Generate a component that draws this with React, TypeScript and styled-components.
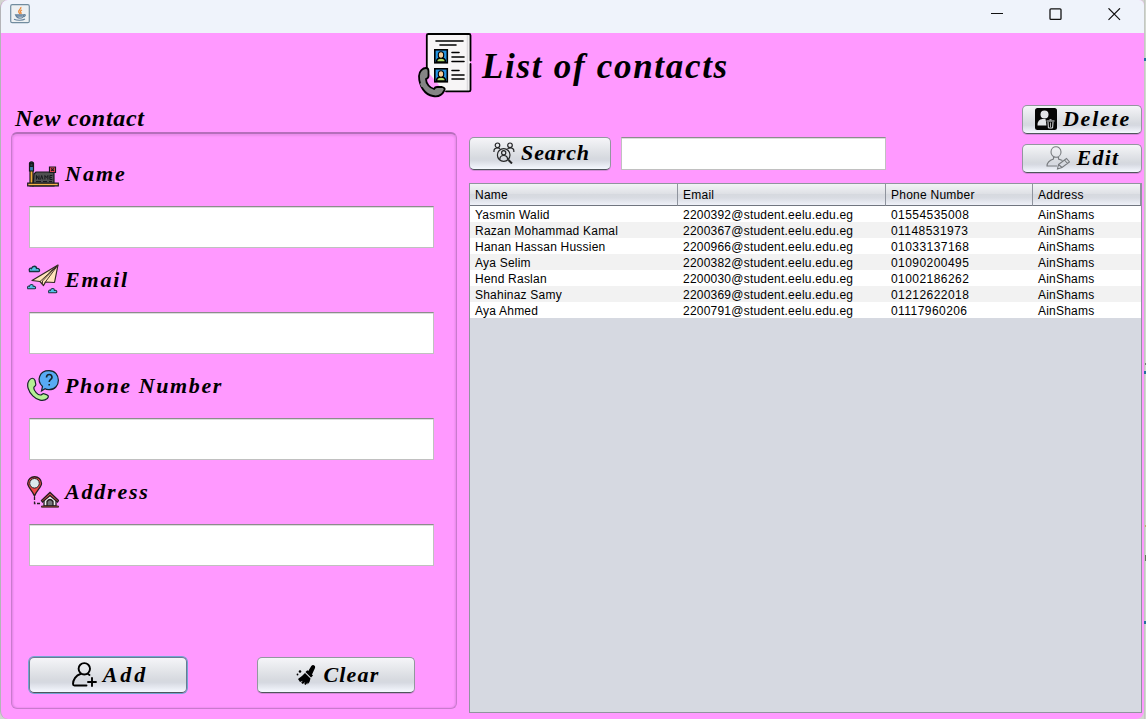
import React from 'react';
import styled, { createGlobalStyle } from 'styled-components';

const GlobalStyle = createGlobalStyle`
  * { box-sizing: border-box; }
  body { margin: 0; background: #d9dcd9; overflow: hidden; }
`;

const Desktop = styled.div`
  display: flex;
  width: 1146px;
  height: 719px;
  background: #d3d5d0;
`;

const Window = styled.main`
  width: 1144px;
  height: 719px;
  border-left: 1px solid #b4b4b8;
  border-radius: 8px 5px 8px 8px;
  background: #ff99ff;
  overflow: hidden;
  font-family: 'Liberation Sans', sans-serif;
`;

const DesktopEdge = styled.div`
  width: 2px;
  height: 719px;
  background:
    linear-gradient(#24709c, #24709c) 0 58px / 2px 3px no-repeat,
    linear-gradient(#777, #777) 1px 363px / 1px 2px no-repeat,
    linear-gradient(#24709c, #24709c) 0 371px / 2px 3px no-repeat,
    linear-gradient(#c9a56f, #c9a56f) 1px 525px / 1px 2px no-repeat,
    linear-gradient(#66705f, #66705f) 1px 555px / 1px 6px no-repeat,
    linear-gradient(#24709c, #24709c) 0 621px / 2px 3px no-repeat,
    linear-gradient(90deg, #bdbfba, #d9dfd6);
`;

const TitleBar = styled.header`
  display: flex;
  justify-content: space-between;
  align-items: flex-start;
  height: 33px;
  padding: 4px 23px 0 9px;
  background: #eff3fb;
`;

const WindowControls = styled.div`
  display: flex;
  gap: 46px;
  padding-top: 4px;
  svg { display: block; }
`;

const Banner = styled.div`
  display: flex;
  height: 65px;
  padding-left: 417px;
  gap: 8px;
`;

const Script = styled.span<{ $size?: number; $track?: number }>`
  font: italic bold ${p => p.$size ?? 22}px/26px 'Liberation Serif', serif;
  letter-spacing: ${p => p.$track ?? 1.5}px;
  color: #000;
  white-space: pre;
`;

const BannerTitle = styled(Script)`
  line-height: 68px;
`;

const Body = styled.div`
  display: flex;
  gap: 12px;
  padding-left: 10px;
`;

const FormColumn = styled.section`
  width: 446px;
  padding: 7px 0 0;
  display: flex;
  flex-direction: column;
`;

const FormHeading = styled(Script)`
  padding-left: 4px;
  height: 27px;
`;

const FormPanel = styled.form`
  height: 577px;
  padding: 24px 23px 15px 16px;
  border: 1px solid #c97bcd;
  border-top: 2px solid #b56ebb;
  border-radius: 6px;
  box-shadow: inset 0 2px 2px #eb8ded, inset 1px 0 2px #df86e2, inset -1px 0 2px #e58ae8;
  display: flex;
  flex-direction: column;
`;

const Field = styled.label`
  display: flex;
  flex-direction: column;
  height: 106px;
`;

const FieldLabel = styled.span`
  display: flex;
  align-items: center;
  gap: 6px;
  height: 32px;
  margin-left: -1px;
  svg { flex: none; }
`;

const TextBox = styled.input`
  width: 405px;
  height: 42px;
  margin: 16px 0 0 1px;
  padding: 4px 6px;
  border: 1px solid #c0c0c0;
  border-top-color: #8c8c8c;
  border-radius: 0;
  outline: 0;
  background: #fff;
  box-shadow: inset 0 1px #dddddd;
  font: 12px 'Liberation Sans', sans-serif;
`;

const SearchBox = styled(TextBox)`
  width: 265px;
  height: 33px;
  margin: 0;
`;

const FormActions = styled.div`
  display: flex;
  gap: 70px;
  margin: auto 0 0 1px;
`;

const Button = styled.button<{ $w: number; $h: number; $gap?: number; $focused?: boolean; $shift?: number }>`
  display: flex;
  flex: none;
  align-items: center;
  justify-content: center;
  gap: ${p => p.$gap ?? 6}px;
  width: ${p => p.$w}px;
  height: ${p => p.$h}px;
  padding: 0 0 1px ${p => p.$shift ?? 0}px;
  border: 1px solid ${p => (p.$focused ? '#687b91' : '#92979e')};
  border-bottom-color: #4f555c;
  border-radius: 5px;
  background: linear-gradient(#f5f5f8 0%, #e4e6ea 35%, #d6d9df 65%, #d6d9e1 72%, #f5f8ff 100%);
  box-shadow: ${p => (p.$focused ? '0 0 0 1px #73a4d1' : '0 1px #d588d8')};
  svg { flex: none; }
`;

const ContactsColumn = styled.section`
  width: 673px;
  padding-top: 7px;
`;

const Toolbar = styled.div`
  display: flex;
  align-items: flex-start;
  height: 78px;
`;

const SearchGroup = styled.div`
  display: flex;
  gap: 10px;
  padding-top: 32px;
  flex: 1;
`;

const RowActions = styled.div`
  display: flex;
  flex-direction: column;
  gap: 10px;
`;

const TableFrame = styled.div`
  width: 673px;
  height: 530px;
  border: 1px solid #8f949e;
  background: #d6d9e1;
`;

const Table = styled.table`
  width: 671px;
  table-layout: fixed;
  border-collapse: separate;
  border-spacing: 0;
  font: 12px/16px 'Liberation Sans', sans-serif;
  letter-spacing: 0.25px;
  color: #000;
`;

const HeaderCell = styled.th`
  height: 22px;
  padding: 0 0 0 5px;
  border-right: 1px solid #8f949e;
  border-bottom: 1px solid #70757f;
  background: linear-gradient(#f2f3f6, #dfe1e6 45%, #d6d9df 50%, #d8dbe2 65%, #eff1f8);
  font-weight: normal;
  text-align: left;
`;

const Row = styled.tr`
  background: #fff;
  &:nth-child(even) { background: #f2f2f2; }
`;

const Cell = styled.td<{ $track?: number }>`
  height: 16px;
  padding: 2px 0 0 5px;
  line-height: 14px;
  letter-spacing: ${p => p.$track ?? 0.22}px;
  white-space: nowrap;
`;

const JavaIcon = () => (
  <svg width="20" height="20" viewBox="0 0 20 20" fill="none">
    <rect x=".7" y=".7" width="18.6" height="18" rx="1.5" fill="#edf0f2" stroke="#718c9f" strokeWidth="1.2" />
    <path d="M10.8 3c1 2-3.3 3-2 5.2.5.8 1.1 1.4.7 2M12 6c-2 1-2 1.8-1 2.7.4.5 0 1.1-.4 1.5" stroke="#e98a3c" strokeWidth="1.3" />
    <path d="M5.5 10.8h8c.1 2.5-1 3.3-3.8 3.3-2.3 0-3.3-.8-4.2-3.3Zm8 0c3-.8 2 2-1 2M4 15.3c3.2 1.4 8.6 1.2 11-.2" stroke="#64819c" strokeWidth="1.2" />
    <path d="M6.5 12h6" stroke="#64819c" strokeWidth="1.5" />
  </svg>
);

const Portrait = ({ y }: { y: number }) => (
  <g transform={`translate(16 ${y})`}>
    <rect x=".8" y=".8" width="12.5" height="13" fill="#2493e0" stroke="#000" strokeWidth="1.6" />
    <path d="M2.5 13c0-3 2-4 4.5-4s4.5 1 4.5 4Z" fill="#afdc68" stroke="#000" />
    <ellipse cx="7" cy="6" rx="2.7" ry="3.3" fill="#f5ce9d" stroke="#000" strokeWidth="1.1" />
  </g>
);

const ContactsIcon = () => (
  <svg width="56" height="65" viewBox="0 0 56 65" fill="none" stroke="#000" strokeWidth="1.6" strokeLinecap="round">
    <path d="M9 2h43v56H26L9 38Z" fill="#f7f5f6" stroke="none" />
    <path d="M49.5 2.5v54.5" stroke="#dcdadd" />
    <path d="M8.8 39V2.2Q8.8 1 10.5 1H51q1.5 0 1.5 1.5v25M52.5 31v26q0 1.3-1.5 1.3H28" strokeWidth="1.8" />
    <path d="M18 8h27M22 12h16M34 19.5h7M34 24h12M34 28.5h12M34 37.5h7M34 42h12M34 46h12" />
    <Portrait y={16} />
    <Portrait y={35} />
    <path d="M1 43C1 38 5 35 8 35q2.5 0 2.5 3v5q0 2-2.5 3c0 5 4 9 8 10q1-2 3-2h5q4 1 2 4c-2 4-6 6-11 5C7 62 1 53 1 43Z" fill="#858585" strokeWidth="1.8" />
    <path d="m3.3 51 1 2" stroke="#858585" strokeWidth="2.4" />
  </svg>
);

const NameIcon = () => (
  <svg width="32" height="32" viewBox="0 -1 32 32" fill="none" stroke="#16181d" strokeWidth="1.2">
    <path d="M3 11h3v16H3z" fill="#f2ac37" />
    <path d="M2.5 4q2-2 4 0v8h-4z" fill="#387fad" />
    <path d="M3 4.5h3v3H3z" fill="#303840" />
    <path d="m7 15 2-2h18v14H6Z" fill="#4f5151" />
    <path d="M.7 24.2h30.6v2.6H.7z" fill="#f6b34c" />
    <path d="M22.5 8h6v5.5h-6z" fill="#f04c58" />
    <path d="m24.2 9.4 2.6 2.6m0-2.6L24.2 12" />
    <path d="M9.5 20.5v-4l2.5 4v-4m1.5 4 1.2-4 1.2 4m2 0v-4l1.5 2 1.5-2v4m4.5-4h-2.5v4h2.5m-2.5-2h2M9 22.5h5m2 0h4m2 0h3" strokeWidth="1" />
  </svg>
);

const Cloud = ({ x, y, scale = 1 }: { x: number; y: number; scale?: number }) => (
  <path transform={`translate(${x} ${y}) scale(${scale})`} d="M1 6c-1-3 1-4 2-3 1-3 5-3 5 0 3-1 4 3 2 3Z" fill="#54c3ea" stroke="#17333f" strokeWidth="1.3" />
);

const EmailIcon = () => (
  <svg width="32" height="32" viewBox="0 0 32 32" fill="none">
    <Cloud x={1.5} y={1.5} />
    <Cloud x={0} y={20} scale={0.78} />
    <Cloud x={21} y={24} scale={0.8} />
    <path d="M31 1 5 16.5l8 1 3.5 4 2-3.5 9 .5Z" fill="#ffe4ba" stroke="#302521" strokeWidth="1.2" strokeLinejoin="round" />
    <path d="M31 1 13 17.5M31 1 18 18.5M31 1 15.5 17v4" stroke="#4a392f" />
    <path d="m31 1-10 8 7-4z" fill="#302521" />
  </svg>
);

const PhoneIcon = () => (
  <svg width="32" height="32" viewBox="0 0 32 32" fill="none" stroke="#17222a" strokeWidth="1.2">
    <path d="M15.5 16.5C9 10 12.500 .7 22 .7c12.500 0 12.500 19 0 19-2 0-3 0-4-1L14.500 21Z" fill="#58aaf4" />
    <path d="M19.5 7.5c0-4 5.500-4 5.500 0 0 2-2.800 2-2.800 4.500m0 2v1.500" strokeWidth="1.6" />
    <path d="M2 10.500c2-3 5-3 6 0l.8 4c0 2-2 1.500-2 3.500 0 3 4 7 6.500 7 2 0 2-2 4-1.200 4 1 5 2.500 3 4.700C12 36-4 20 2 10.500Z" fill="#b4ef94" />
  </svg>
);

const AddressIcon = () => (
  <svg width="32" height="32" viewBox="0 0 32 32" fill="none" stroke="#241e20" strokeWidth="1.3">
    <path d="M7.500 20C5 14 .7 11 .7 7.500c0-9 13.800-9 13.800 0C14.500 11 10 14 7.500 20Z" fill="#f04949" />
    <circle cx="7.500" cy="7.300" r="4.800" fill="#dbe9ed" strokeWidth="1" />
    <path d="M7.500 21v6.500h6" strokeDasharray="3 1.500" />
    <path d="M17 24v6h12v-6l-6-5Z" fill="#eceeed" />
    <path d="m14.500 24.500 8.500-8 8.500 8-1 1.500-7.500-6.500-7.500 6.500Z" fill="#e65252" />
    <path d="M20 30v-4.500q3-4 6 0V30Z" fill="#75787c" />
    <path d="M14.500 30h17v1.200h-17z" fill="#b45430" strokeWidth=".8" />
  </svg>
);

const AddIcon = () => (
  <svg width="25" height="25" viewBox="0 0 25 25" fill="none" stroke="#000" strokeWidth="1.9" strokeLinecap="round">
    <circle cx="12.3" cy="6.8" r="5.7" />
    <path d="M8.5 12C4 13 1 18 1 22q0 1.5 1.500 1.500h12M16 12l1.500 1M20 16v8m-4-4h8" />
  </svg>
);

const ClearIcon = () => (
  <svg width="20" height="20" viewBox="0 0 20 20" fill="#000">
    <path d="m12.300 6 3-5q1.500-1.700 3.300-.3.900.8.300 2.600L16 9.500l1 1-2 2-5.500-5.500 1.800-1.700ZM9 8l5.500 5.500-1 3.500-2 2.500v-2L9.700 20l-1.500-1 1-2-2.400 2-1.600-1.300 1.600-2-2.800 1.200-2-3Q6.500 11 9 8Z" />
    <circle cx="4" cy="6.500" r="1.300" /><circle cx="1.500" cy="9.500" r=".9" />
  </svg>
);

const SearchIcon = () => (
  <svg width="22" height="22" viewBox="0 0 22 22" fill="none" stroke="#242527" strokeWidth="1.2">
    <circle cx="4.500" cy="3.300" r="2.300" /><circle cx="17" cy="3.300" r="2.300" />
    <path d="M1 10Q.5 6 4.500 6q2 0 2.500 1M20.800 10q.5-4-3.300-4-2 0-3 1" />
    <circle cx="10.700" cy="13" r="6.300" /><circle cx="10.700" cy="10.700" r="2.100" />
    <path d="M6.800 17.500q0-4 3.900-4t3.900 4" />
    <path d="m15.500 18 3.500 3.500" strokeWidth="2" />
  </svg>
);

const DeleteIcon = () => (
  <svg width="22" height="22" viewBox="0 0 22 22" fill="none">
    <rect width="22" height="22" rx="2.500" fill="#050505" />
    <circle cx="9.500" cy="6.500" r="4" fill="#e2e4e8" />
    <path d="M2.500 17.500q0-6.500 5-6.500h4v6.500Z" fill="#e2e4e8" />
    <path d="M10.500 11h10v10h-8Z" fill="#050505" />
    <path d="M11.500 13h8m-5-1.200h2M13 14l.4 6h4.200l.4-6" stroke="#e2e4e8" strokeWidth="1" />
    <path d="M15.500 14.500v4.500" stroke="#aaa" />
  </svg>
);

const EditIcon = () => (
  <svg width="24" height="24" viewBox="0 0 24 24" fill="none" stroke="#777a7e" strokeWidth="1.1">
    <path d="M5 6c0-7 10-7 10 0S5 13 5 6Zm2.500 5v2C3 14.500 1 16 1 20h10M12.500 11v2l4 1.500" />
    <path d="m12.500 18.500 8-6 3 3.500-7.500 5.500-4.500 1.500Zm0 0 3.500 3M18.500 14l3 3.500" />
  </svg>
);

const contacts = [
  ['Yasmin Walid', '2200392@student.eelu.edu.eg', '01554535008'],
  ['Razan Mohammad Kamal', '2200367@student.eelu.edu.eg', '01148531973'],
  ['Hanan Hassan Hussien', '2200966@student.eelu.edu.eg', '01033137168'],
  ['Aya Selim', '2200382@student.eelu.edu.eg', '01090200495'],
  ['Hend Raslan', '2200030@student.eelu.edu.eg', '01002186262'],
  ['Shahinaz Samy', '2200369@student.eelu.edu.eg', '01212622018'],
  ['Aya Ahmed', '2200791@student.eelu.edu.eg', '01117960206'],
];

const fields = [
  { label: 'Name', track: 2, icon: <NameIcon /> },
  { label: 'Email', track: 1.8, icon: <EmailIcon /> },
  { label: 'Phone Number', track: 1.6, icon: <PhoneIcon /> },
  { label: 'Address', track: 1.8, icon: <AddressIcon /> },
];

export default function App() {
  return (
    <Desktop>
      <GlobalStyle />
      <Window>
        <TitleBar>
          <JavaIcon />
          <WindowControls>
            <svg width="13" height="13"><path d="M1 5.5h12" stroke="#111" /></svg>
            <svg width="13" height="13"><rect x="1" y=".8" width="11" height="10.600" rx="1" fill="none" stroke="#111" strokeWidth="1.3" /></svg>
            <svg width="13" height="13"><path d="m.5.3 11.500 11.500m0-11.500L.5 11.800" stroke="#111" strokeWidth="1.2" /></svg>
          </WindowControls>
        </TitleBar>
        <Banner>
          <ContactsIcon />
          <BannerTitle $size={35} $track={1.7}>List of contacts</BannerTitle>
        </Banner>
        <Body>
          <FormColumn>
            <FormHeading $size={24} $track={0.7}>New contact</FormHeading>
            <FormPanel>
              {fields.map(f => (
                <Field key={f.label}>
                  <FieldLabel>{f.icon}<Script $track={f.track}>{f.label}</Script></FieldLabel>
                  <TextBox />
                </Field>
              ))}
              <FormActions>
                <Button type="button" $w={158} $h={36} $shift={4} $focused><AddIcon /><Script $track={3}>Add</Script></Button>
                <Button type="button" $w={158} $h={36} $gap={7} $shift={4}><ClearIcon /><Script $track={1.2}>Clear</Script></Button>
              </FormActions>
            </FormPanel>
          </FormColumn>
          <ContactsColumn>
            <Toolbar>
              <SearchGroup>
                <Button $w={142} $h={33} $gap={6} $shift={3}><SearchIcon /><Script $track={0.9}>Search</Script></Button>
                <SearchBox />
              </SearchGroup>
              <RowActions>
                <Button $w={120} $h={29} $shift={2}><DeleteIcon /><Script $track={1.8}>Delete</Script></Button>
                <Button $w={120} $h={29} $shift={2}><EditIcon /><Script $track={1.3}>Edit</Script></Button>
              </RowActions>
            </Toolbar>
            <TableFrame>
              <Table>
                <colgroup><col width="208" /><col width="208" /><col width="147" /><col width="108" /></colgroup>
                <thead>
                  <tr>{['Name', 'Email', 'Phone Number', 'Address'].map(h => <HeaderCell key={h}>{h}</HeaderCell>)}</tr>
                </thead>
                <tbody>
                  {contacts.map(([name, email, phone]) => (
                    <Row key={email}>
                      <Cell>{name}</Cell><Cell>{email}</Cell><Cell $track={0.44}>{phone}</Cell><Cell>AinShams</Cell>
                    </Row>
                  ))}
                </tbody>
              </Table>
            </TableFrame>
          </ContactsColumn>
        </Body>
      </Window>
      <DesktopEdge />
    </Desktop>
  );
}
